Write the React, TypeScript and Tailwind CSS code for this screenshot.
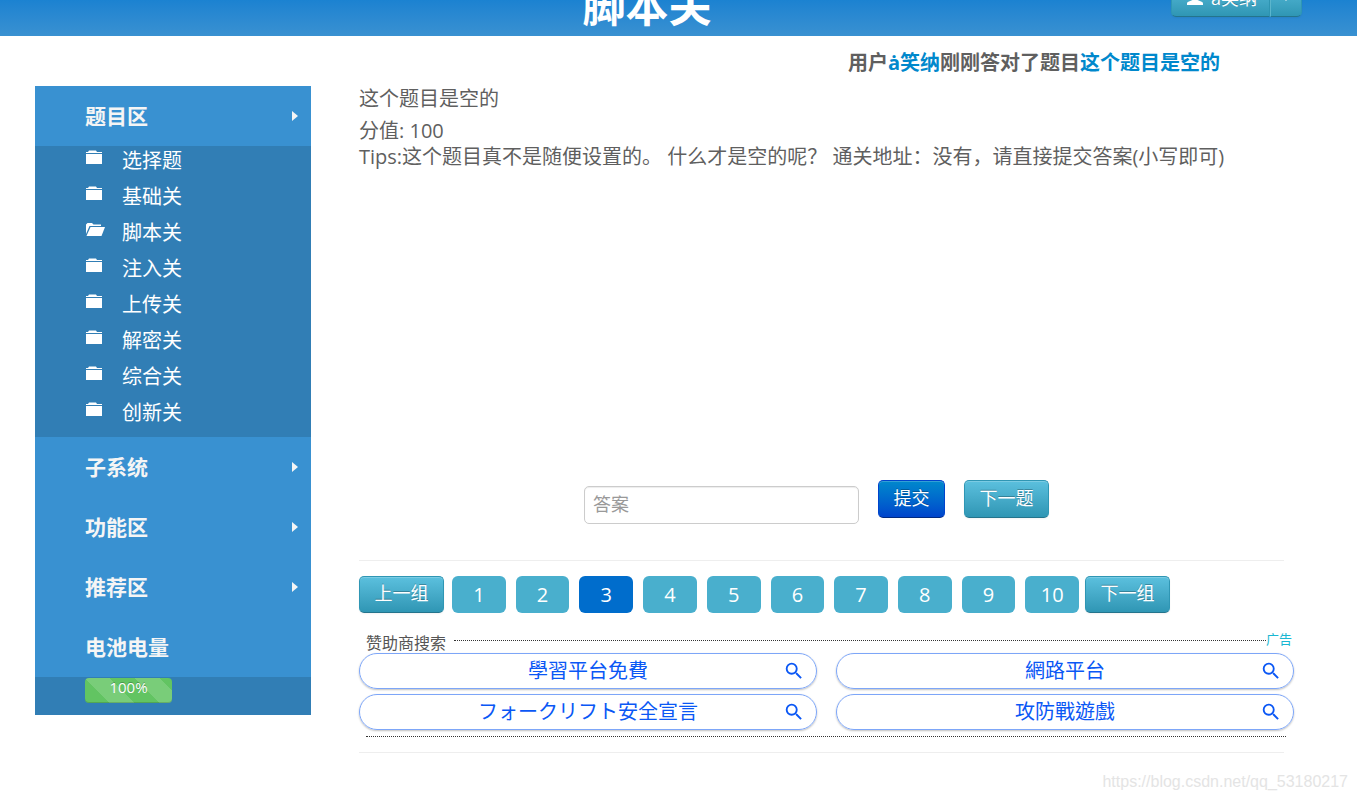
import React, { useState } from "react";
import { MdSearch } from "react-icons/md";

const userName = "ȧ笑纳";

const levels = [
  { _id: 1, title: "选择题" },
  { _id: 2, title: "基础关" },
  { _id: 3, title: "脚本关" },
  { _id: 4, title: "注入关" },
  { _id: 5, title: "上传关" },
  { _id: 6, title: "解密关" },
  { _id: 7, title: "综合关" },
  { _id: 8, title: "创新关" },
];

const sections = ["子系统", "功能区", "推荐区"];

const pages = [1, 2, 3, 4, 5, 6, 7, 8, 9, 10];

const sponsors = [
  { title: "學習平台免費", lang: "zh-TW" },
  { title: "網路平台", lang: "zh-TW" },
  { title: "フォークリフト安全宣言", lang: "ja" },
  { title: "攻防戰遊戲", lang: "zh-TW" },
];

const infoButton =
  "border border-[#2f96b4] border-b-[#24748c] bg-linear-to-b from-[#5bc0de] to-[#2f96b4] text-white text-[18px] leading-6 shadow-[inset_0_1px_0_rgba(255,255,255,0.2),0_1px_2px_rgba(0,0,0,0.05)] [text-shadow:0_-1px_0_rgba(0,0,0,0.25)] cursor-pointer";

const FolderIcon = ({ open }: { open: boolean }) => (
  <svg width="20" height="15" viewBox="0 0 20 15" fill="white" aria-hidden="true">
    {open ? (
      <>
        <path d="M1 12V2.500L2.500 1H7l1.500 1.500H16V4H4.500L1 12Z" />
        <path d="M5.500 5H20l-3.500 9H1.500L5.500 5Z" />
      </>
    ) : (
      <>
        <path d="M1 3V2h2l1-1.500h7L12 2h5v1H1Z" />
        <path d="M1 4h16v10H1V4Z" />
      </>
    )}
  </svg>
);

const Arrow = () => (
  <svg width="7" height="10" viewBox="0 0 7 10" fill="#f5f5f5" aria-hidden="true">
    <path d="M0 0L6 5L0 10Z" />
  </svg>
);

const SectionTitle = ({ title, onClick }: { title: string; onClick?: () => void }) => (
  <button
    onClick={onClick}
    className="w-full h-15 pl-[50px] pr-3 flex items-center justify-between bg-[#3991d1] text-[#f5f5f5] text-[21px] font-bold cursor-pointer"
  >
    <span className="pt-[2px]">{title}</span>
    <Arrow />
  </button>
);

const Header = () => (
  <header className="h-9 overflow-hidden pl-[123px] pr-[55px] flex items-end bg-linear-to-b from-[#1b82d1] to-[#3991d1]">
    <h1 className="flex-1 text-center text-[43px] leading-[60px] font-bold text-white">
      脚本关
    </h1>
    <div className="flex mb-[19px]">
      <button className={`${infoButton} h-[38px] pl-[15px] pr-3 flex items-center gap-2 rounded-l-[5px]`}>
        <svg width="16" height="16" viewBox="0 0 16 16" fill="white" aria-hidden="true">
          <path d="M8 1c2 0 3.300 1.500 3.300 3.600 0 1.700-.8 3-1.700 3.800v1.200l5 2.200c.9.400 1.400 1 1.400 2V15H0v-1.200c0-1 .5-1.600 1.400-2l5-2.200V8.400c-.9-.8-1.700-2.100-1.700-3.800C4.700 2.500 6 1 8 1Z" />
        </svg>
        {userName}
      </button>
      <button
        aria-label="用户菜单"
        className={`${infoButton} w-8 h-[38px] flex items-center justify-center rounded-r-[5px] border-l-[#5bb5cc]`}
      >
        <svg width="8" height="5" viewBox="0 0 8 5" fill="white" aria-hidden="true">
          <path d="M0 0H8L4 5Z" />
        </svg>
      </button>
    </div>
  </header>
);

const Sidebar = () => {
  const [showLevels, setShowLevels] = useState(true);
  const [current, setCurrent] = useState(3);

  return (
    <aside className="w-[276px] shrink-0 self-start bg-[#317eb5]">
      <SectionTitle title="题目区" onClick={() => setShowLevels(!showLevels)} />
      {showLevels && (
        <ul className="flex flex-col gap-2 pb-[11px]">
          {levels.map(({ _id, title }) => (
            <li key={_id}>
              <a
                href="#"
                onClick={() => setCurrent(_id)}
                className="h-7 pl-[50px] flex gap-[17px] text-[20px] leading-[30px] text-white"
              >
                <span className="pt-1">
                  <FolderIcon open={_id === current} />
                </span>
                {title}
              </a>
            </li>
          ))}
        </ul>
      )}
      {sections.map((title) => (
        <SectionTitle key={title} title={title} />
      ))}
      <h2 className="h-15 pl-[50px] pt-[2px] flex items-center bg-[#3991d1] text-[#f5f5f5] text-[21px] font-bold">
        电池电量
      </h2>
      <div className="pl-[50px] pt-px pb-3">
        <div className="w-[87px] h-[25px] rounded-sm bg-[#62c462] bg-[linear-gradient(45deg,rgba(255,255,255,0.15)_25%,transparent_25%,transparent_50%,rgba(255,255,255,0.15)_50%,rgba(255,255,255,0.15)_75%,transparent_75%,transparent)] bg-[length:50px_50px] shadow-[inset_0_-1px_0_rgba(0,0,0,0.15)] text-center text-[15px] leading-[18px] text-white [text-shadow:0_-1px_0_rgba(0,0,0,0.25)]">
          100%
        </div>
      </div>
    </aside>
  );
};

const Pagination = () => {
  const [page, setPage] = useState(3);

  return (
    <nav className="max-w-[811px] mt-[15px] flex">
      <button className={`${infoButton} w-[85px] h-[37px] pb-1 rounded-[5px]`}>上一组</button>
      <ul className="flex-1 ml-2 mr-[6px] flex gap-[10px]">
        {pages.map((item) => (
          <li key={item} className="flex-1">
            <button
              onClick={() => setPage(item)}
              className={`w-full h-[37px] rounded-md text-white text-[20px] font-medium cursor-pointer ${
                item === page ? "bg-[#006dcc]" : "bg-[#49afcd]"
              }`}
            >
              {item}
            </button>
          </li>
        ))}
      </ul>
      <button className={`${infoButton} w-[85px] h-[37px] pb-1 rounded-[5px]`}>下一组</button>
    </nav>
  );
};

const Sponsors = () => (
  <section className="mt-[18px]">
    <div className="h-[22px] pl-[7px] pr-[2px] flex">
      <h3 className="text-[16px] leading-6 text-[#555]">赞助商搜索</h3>
      <div className="flex-1 ml-2 mt-[9px] h-px border-t border-dotted border-[#333]"></div>
      <a href="#" className="text-[13px] leading-4 text-[#1ab7d2]">
        广告
      </a>
    </div>
    <ul className="grid grid-cols-2 gap-x-[19px] gap-y-[5px]">
      {sponsors.map(({ title, lang }) => (
        <li key={title}>
          <a
            href="#"
            lang={lang}
            className="h-9 pr-[11px] flex items-center rounded-full border border-[#7da6f8] shadow-[0_1px_2px_rgba(0,0,0,0.25)] text-[20px] text-[#0a57f5]"
          >
            <span className="flex-1 pl-[33px] text-center leading-8">{title}</span>
            <MdSearch className="size-[22px]" />
          </a>
        </li>
      ))}
    </ul>
    <div className="mt-[6px] ml-[7px] mr-2 border-t border-dotted border-[#333]"></div>
  </section>
);

const Question = () => (
  <main className="flex-1 min-w-0 text-[20px] leading-[26px] text-[#5f5f5f]">
    <h2>这个题目是空的</h2>
    <p className="mt-[6px]">分值: 100</p>
    <p className="min-h-[310px]">
      Tips:这个题目真不是随便设置的。 什么才是空的呢？ 通关地址：没有，请直接提交答案(小写即可)
    </p>
    <form
      onSubmit={(e) => e.preventDefault()}
      className="pt-[26px] flex items-start pl-[225px] pb-9"
    >
      <input
        type="text"
        aria-label="答案"
        placeholder="答案"
        className="w-[275px] h-[38px] mt-[6px] px-2 pb-[2px] rounded-[5px] border border-[#ccc] shadow-[inset_0_1px_1px_rgba(0,0,0,0.075)] text-[18px] placeholder:text-[#999] outline-none"
      />
      <button className="ml-[19px] w-[67px] h-[38px] pb-[2px] rounded-[5px] border border-[#04c] border-b-[#002a80] bg-linear-to-b from-[#0088cc] to-[#0044cc] text-white text-[18px] leading-6 shadow-[inset_0_1px_0_rgba(255,255,255,0.2)] [text-shadow:0_-1px_0_rgba(0,0,0,0.25)] cursor-pointer">
        提交
      </button>
      <button type="button" className={`${infoButton} ml-[19px] w-[85px] h-[38px] pb-[2px] rounded-[5px]`}>
        下一题
      </button>
    </form>
    <hr className="mr-[10px] border-[#eee]" />
    <Pagination />
    <Sponsors />
    <hr className="mt-[15px] mr-[10px] border-[#eee]" />
  </main>
);

const App = () => {
  return (
    <div
      lang="zh-CN"
      className="bg-white font-['Open_Sans','Noto_Sans_CJK_SC',sans-serif]"
    >
      <Header />
      <p className="h-[50px] pr-[137px] text-right text-[20px] leading-[54px] font-bold text-[#5f5f5f]">
        用户
        <a href="#" className="text-[#08c]">
          {userName}
        </a>
        刚刚答对了题目
        <a href="#" className="text-[#08c]">
          这个题目是空的
        </a>
      </p>
      <div className="flex gap-12 pl-[35px] pr-[63px]">
        <Sidebar />
        <Question />
      </div>
      <footer className="pt-[17px] pr-[9px] text-right font-['Liberation_Sans',sans-serif] text-[16px] leading-6 text-[#e4e4e4]">
        https://blog.csdn.net/qq_53180217
      </footer>
    </div>
  );
};

export default App;
